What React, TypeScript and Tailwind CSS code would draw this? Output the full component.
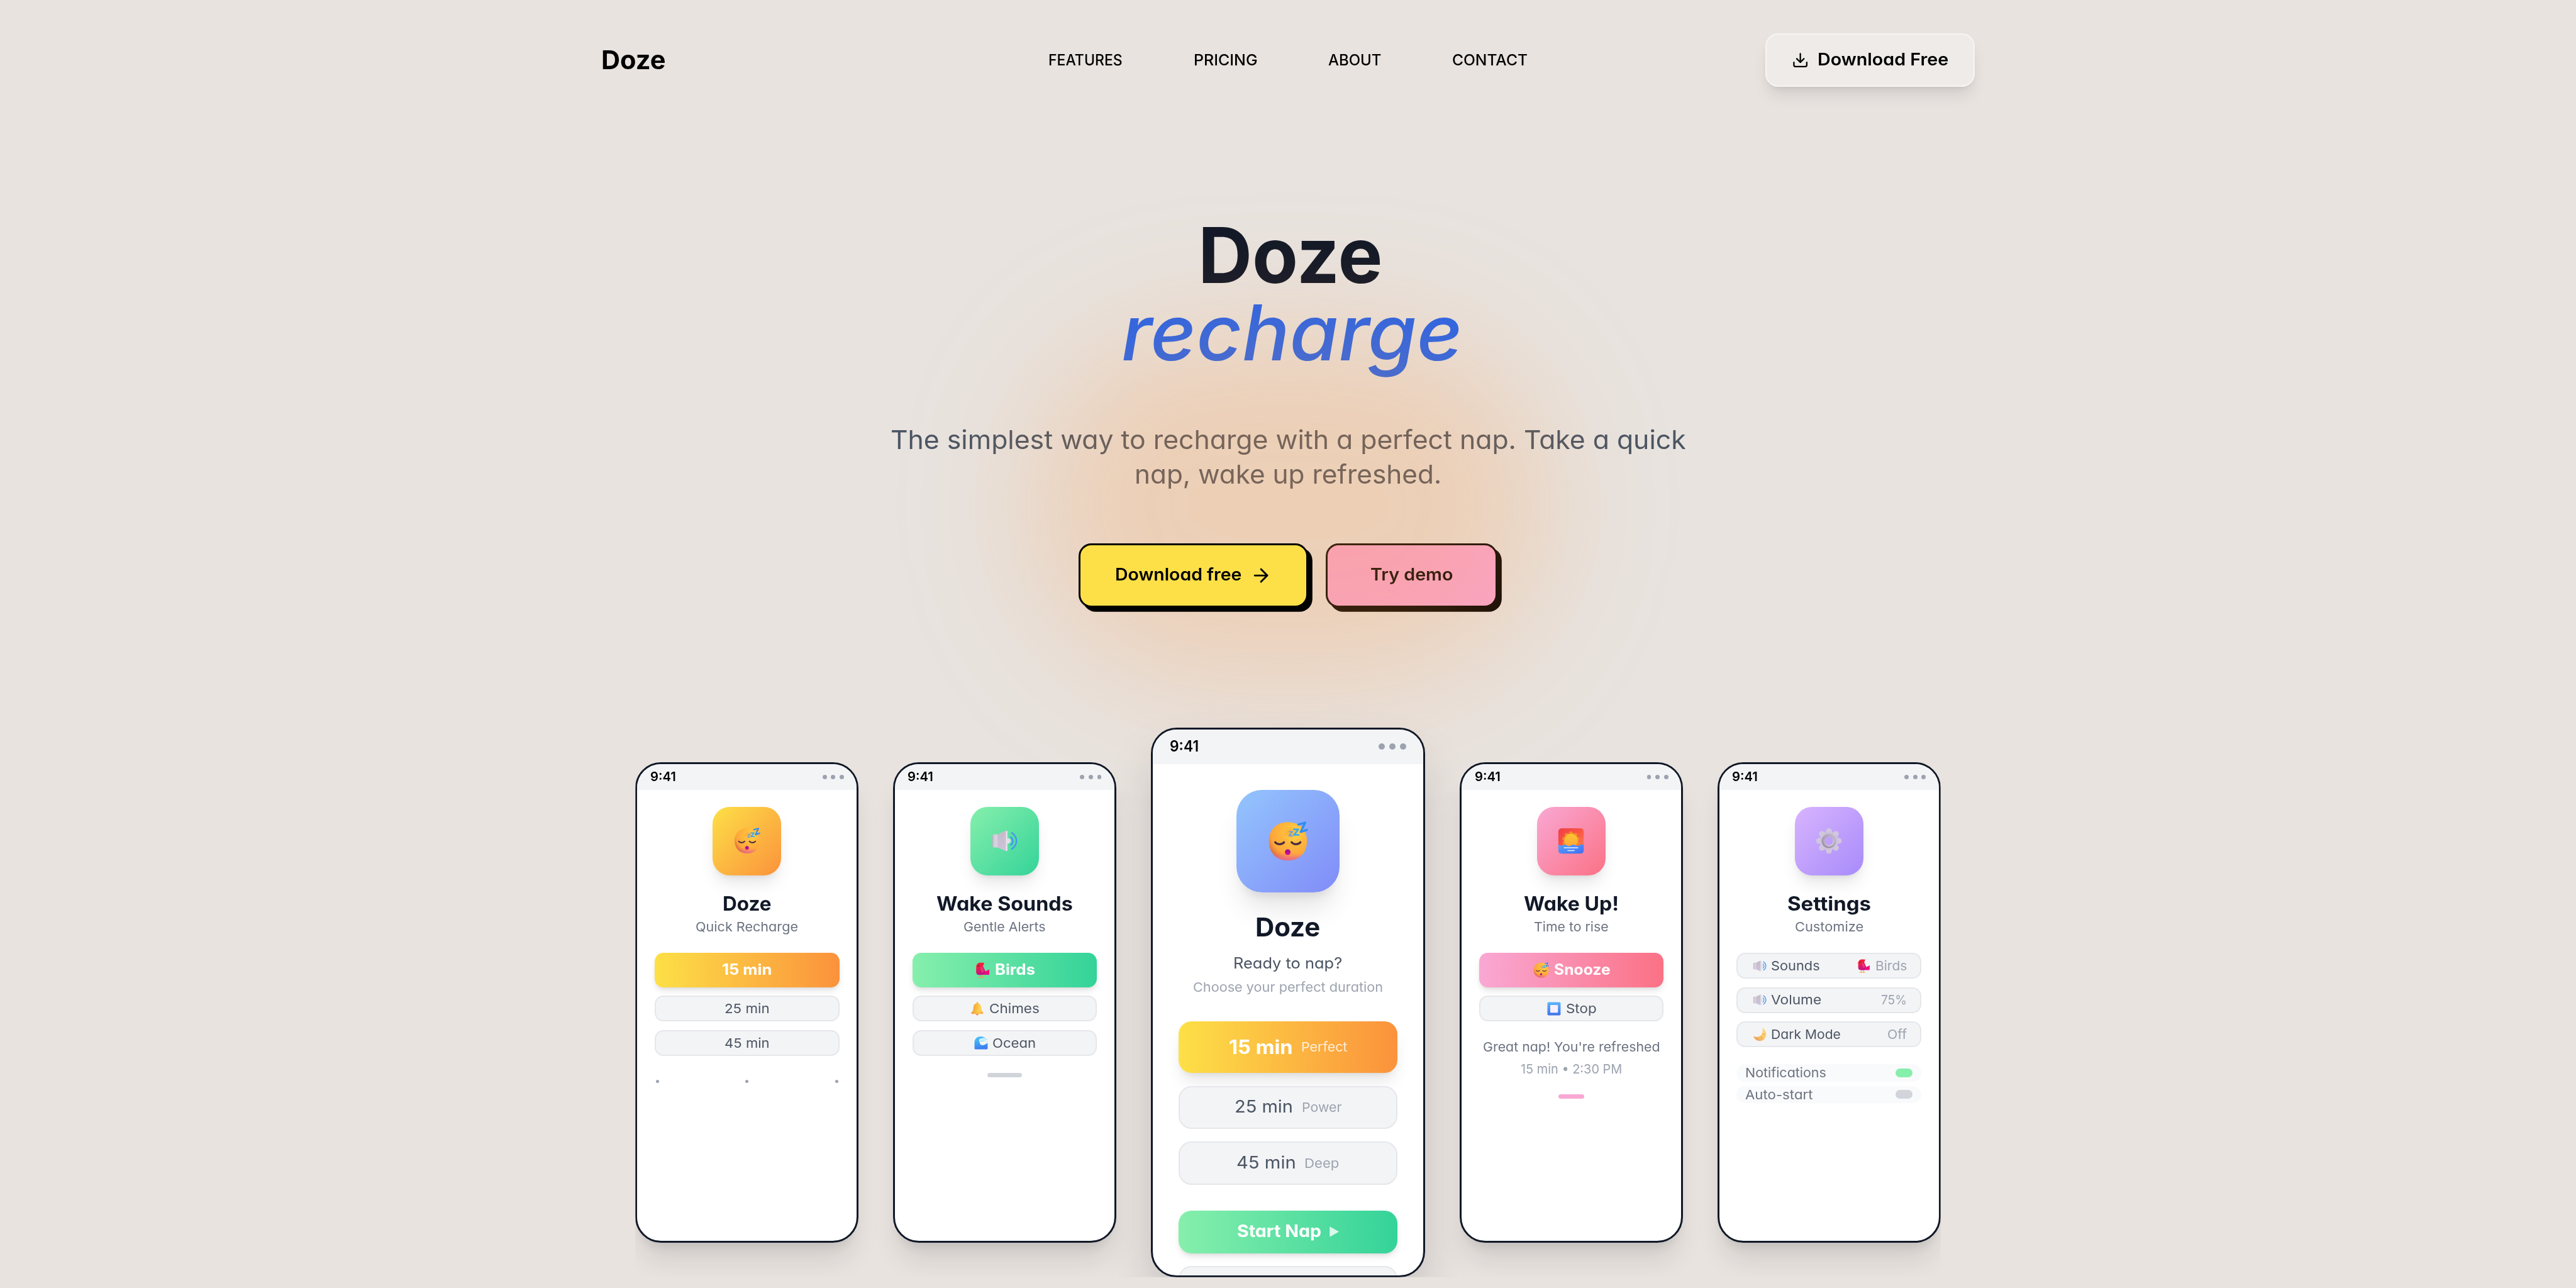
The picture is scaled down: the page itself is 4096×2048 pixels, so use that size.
import { useLayoutEffect, useRef, useState } from "react";
import type { ReactNode } from "react";

/* Text set to an exact advance width by widening or narrowing its letters. */
function T({ w, children, className = "" }: { w: number; children: string; className?: string }) {
  const outer = useRef<HTMLSpanElement>(null);
  const inner = useRef<HTMLSpanElement>(null);
  const [stretch, setStretch] = useState(1);
  useLayoutEffect(() => {
    if (!outer.current || !inner.current) return;
    inner.current.style.transform = "none";
    const ratio = outer.current.getBoundingClientRect().width / inner.current.getBoundingClientRect().width;
    inner.current.style.transform = `scaleX(${ratio})`;
    setStretch(ratio);
  }, [w, children]);
  return (
    <span ref={outer} className={`inline-block shrink-0 text-left whitespace-nowrap ${className}`} style={{ width: w }}>
      <span ref={inner} className="inline-block origin-left whitespace-nowrap" style={{ transform: `scaleX(${stretch})` }}>
        {children}
      </span>
    </span>
  );
}

function Face({ className }: { className: string }) {
  return (
    <svg viewBox="0 0 32 32" className={className}>
      <defs>
        <radialGradient id="faceBase" cx="0.66" cy="0.28" r="0.8">
          <stop offset="0" stopColor="#ffd84e" />
          <stop offset="0.35" stopColor="#ffb93c" />
          <stop offset="0.75" stopColor="#fda63a" />
          <stop offset="1" stopColor="#d9653f" />
        </radialGradient>
        <linearGradient id="faceLow" x1="0" y1="0" x2="0" y2="1">
          <stop offset="0.8" stopColor="#f0699a" stopOpacity="0" />
          <stop offset="1" stopColor="#ea6a9c" stopOpacity="0.85" />
        </linearGradient>
        <radialGradient id="faceShade" cx="0.5" cy="0.5" r="0.5">
          <stop offset="0" stopColor="#ee8f2c" stopOpacity="0.6" />
          <stop offset="1" stopColor="#ee8f2c" stopOpacity="0" />
        </radialGradient>
        <linearGradient id="faceMouth" x1="0" y1="0" x2="0" y2="1">
          <stop offset="0" stopColor="#8f0aa0" />
          <stop offset="1" stopColor="#e0108c" />
        </linearGradient>
      </defs>
      <path d="M16 2C25.5 2 29.8 8.4 29.8 15.8C29.8 23.4 25.2 29.8 16 29.8C6.8 29.8 2.1 23.4 2.1 15.8C2.1 8.4 6.6 2 16 2Z" fill="url(#faceBase)" />
      <path d="M16 2C25.5 2 29.8 8.4 29.8 15.8C29.8 23.4 25.2 29.8 16 29.8C6.8 29.8 2.1 23.4 2.1 15.8C2.1 8.4 6.6 2 16 2Z" fill="url(#faceLow)" />
      <ellipse cx="18" cy="9.5" rx="5.5" ry="4.6" fill="url(#faceShade)" />
      <g fill="none" stroke="#4a2c42" strokeWidth="1.5" strokeLinecap="round">
        <path d="M6.7 16.6C8.3 18.5 11.6 18.5 13.1 16.6" />
        <path d="M18.6 16.6C20.2 18.5 23.5 18.5 25 16.6" />
      </g>
      <circle cx="15.8" cy="23.8" r="2.05" fill="url(#faceMouth)" />
      <g fill="none" strokeLinecap="round" strokeLinejoin="round">
        <path d="M23.5 3.7L28.5 2.3L25.2 9.1L29.7 7.6" stroke="#2f8df2" strokeWidth="1.5" />
        <path d="M20.3 7.2H23.5L20.4 11.2H23.8" stroke="#35a9f6" strokeWidth="1.2" />
        <path d="M17.2 8.8L19.3 8.9L16.8 11.8L19.2 12" stroke="#64a3e8" strokeWidth="0.9" />
      </g>
    </svg>
  );
}

function Speaker({ className }: { className: string }) {
  return (
    <svg viewBox="0 0 32 32" className={className}>
      <defs>
        <linearGradient id="spkBack" x1="0" y1="0" x2="1" y2="0">
          <stop offset="0" stopColor="#b5acba" />
          <stop offset="0.3" stopColor="#d3ccdb" />
          <stop offset="1" stopColor="#dcd6e4" />
        </linearGradient>
        <linearGradient id="spkCone" x1="0" y1="0" x2="0.3" y2="1">
          <stop offset="0" stopColor="#c3bbc4" />
          <stop offset="1" stopColor="#cdc3da" />
        </linearGradient>
      </defs>
      <circle cx="20" cy="16" r="2.9" fill="#e4e0e8" />
      <path d="M4 8.9H9V23.3H4Q2.6 23.3 2.6 21.8V10.4Q2.6 8.9 4 8.9Z" fill="url(#spkBack)" />
      <path d="M8.4 8.9L17.2 4.9Q19.4 4.2 19.4 6.2V25.8Q19.4 27.8 17.2 27.1L8.4 23.3Z" fill="url(#spkCone)" />
      <path d="M18.5 5.7V26.3" stroke="#e6e2ea" strokeWidth="1.7" strokeLinecap="round" />
      <g fill="none" stroke="#4596f3" strokeWidth="1.7" strokeLinecap="round">
        <path d="M23.1 11.8C26.1 14.2 26.1 18.2 23.1 20.6" />
        <path d="M24.2 7.2C31 12 31 20.5 24.2 25" />
      </g>
    </svg>
  );
}

function Bird({ className }: { className: string }) {
  return (
    <svg viewBox="0 0 32 32" className={className}>
      <defs>
        <linearGradient id="birdBody" x1="0.3" y1="0" x2="0.5" y2="1">
          <stop offset="0" stopColor="#fb1f30" />
          <stop offset="0.45" stopColor="#e81d52" />
          <stop offset="1" stopColor="#c0108a" />
        </linearGradient>
        <linearGradient id="birdTail" x1="0" y1="0" x2="1" y2="0">
          <stop offset="0" stopColor="#d4157c" />
          <stop offset="1" stopColor="#fb0a80" />
        </linearGradient>
      </defs>
      <path d="M11.5 24V29.4M16.3 24V29.4M7.8 29.6H12.5M13.6 29.6H19.4" stroke="#f09a30" strokeWidth="1.2" fill="none" strokeLinecap="round" />
      <path d="M5.2 8L2.4 10.2L5.2 11.6Z" fill="#f9b233" />
      <path d="M16 18.5L21 18.8L29.4 14.6V23.6Q29.4 24.7 28.2 24.7H14Z" fill="url(#birdTail)" />
      <path d="M5 10.5C5 5 8.2 2 12.5 2H18.6Q20 2.2 19.6 3.7L17.6 8.2L21.6 17C22.6 21.5 19 24.9 14 24.9H10.5C7 24.9 4.8 22.6 4.8 19Z" fill="url(#birdBody)" />
      <ellipse cx="16" cy="15" rx="2.3" ry="5.6" fill="#f5478f" opacity="0.65" transform="rotate(-18 16 15)" />
      <circle cx="9" cy="8.2" r="1.05" fill="#5a1238" />
    </svg>
  );
}

function Bell({ className }: { className: string }) {
  return (
    <svg viewBox="0 0 32 32" className={className}>
      <defs>
        <linearGradient id="bellBody" x1="0" y1="0.3" x2="1" y2="0.5">
          <stop offset="0" stopColor="#ea9345" />
          <stop offset="0.4" stopColor="#fbb840" />
          <stop offset="0.75" stopColor="#fdd555" />
          <stop offset="1" stopColor="#f7b343" />
        </linearGradient>
      </defs>
      <circle cx="16" cy="27" r="3" fill="#ef8d60" />
      <circle cx="16" cy="4" r="1.9" fill="#f7b13e" />
      <path d="M16 4.2C21.6 4.2 23.8 8.4 24.2 13L25 19.2Q25.3 21 26.8 22Q28.9 23.4 28.9 25.2Q28.9 27 27 27H5Q3.1 27 3.1 25.2Q3.1 23.4 5.2 22Q6.7 21 7 19.2L7.8 13C8.2 8.4 10.4 4.2 16 4.2Z" fill="url(#bellBody)" />
      <path d="M4.5 24.3H27.5" stroke="#e8953f" strokeWidth="0.9" opacity="0.6" />
    </svg>
  );
}

function Wave({ className }: { className: string }) {
  return (
    <svg viewBox="0 0 32 32" className={className}>
      <defs>
        <linearGradient id="waveBody" x1="0" y1="0" x2="0.2" y2="1">
          <stop offset="0" stopColor="#54c4fb" />
          <stop offset="0.6" stopColor="#3fa0f5" />
          <stop offset="1" stopColor="#3d7df0" />
        </linearGradient>
      </defs>
      <path d="M2 16C2 8 7.5 2.6 14.5 2.6C20 2.6 24 4.4 26.5 8.5L22 13H14.5C12 15.5 13.5 20.5 18.5 21.3C22.5 22 26 18.5 30 16.8V28.2Q30 30 28.2 30H3.8Q2 30 2 28.2Z" fill="url(#waveBody)" />
      <path d="M12 9.5Q14 6 18 7Q20.5 4.8 23.2 6.6Q26.5 6 26.6 9.4Q28 11 26 12.2Q24.5 14.4 22.3 12.6Q19.5 14 17.6 12.1Q15 13 14.6 15.2Q13.5 17 12.6 14.6Q11 12 12 9.5Z" fill="#c8f0ff" />
      <circle cx="27.6" cy="9" r="1.1" fill="#8fd8fb" />
      <circle cx="28.4" cy="14.3" r="1" fill="#8fd8fb" />
    </svg>
  );
}

function Sunrise({ className }: { className: string }) {
  return (
    <svg viewBox="0 0 32 32" className={className}>
      <defs>
        <linearGradient id="sunSky" x1="0" y1="0" x2="1" y2="1">
          <stop offset="0" stopColor="#f03f46" />
          <stop offset="0.5" stopColor="#fb5645" />
          <stop offset="1" stopColor="#ff8a55" />
        </linearGradient>
        <linearGradient id="sunDisc" x1="0" y1="0" x2="0" y2="1">
          <stop offset="0" stopColor="#fcc62f" />
          <stop offset="1" stopColor="#fda53b" />
        </linearGradient>
        <linearGradient id="sunSea" x1="0" y1="0" x2="1" y2="1">
          <stop offset="0" stopColor="#58a2ff" />
          <stop offset="1" stopColor="#3f6ef0" />
        </linearGradient>
      </defs>
      <rect x="2" y="2" width="28" height="28" rx="3.6" fill="url(#sunSky)" />
      <g fill="#f38a2a">
        <circle cx="16" cy="8" r="2.4" />
        <circle cx="11.2" cy="9.6" r="2.3" />
        <circle cx="20.8" cy="9.6" r="2.3" />
        <circle cx="8.6" cy="13.6" r="2.2" />
        <circle cx="23.4" cy="13.6" r="2.2" />
        <circle cx="8.8" cy="18.4" r="2.2" />
        <circle cx="23.2" cy="18.4" r="2.2" />
      </g>
      <circle cx="16" cy="15.5" r="7.4" fill="url(#sunDisc)" />
      <path d="M2 20Q4.3 22 6.7 20.6Q9 19.4 11.3 21Q13.6 22.6 16 21Q18.4 19.4 20.7 21Q23 22.4 25.3 20.6Q27.6 19.4 30 20.4V26.4Q30 30 26.4 30H5.6Q2 30 2 26.4Z" fill="url(#sunSea)" />
      <path d="M8.5 23.6H23.5M12.4 26.7H19.6" stroke="#e6eeff" strokeWidth="1.1" strokeLinecap="round" />
    </svg>
  );
}

const teeth = [0, 45, 90, 135, 180, 225, 270, 315];

function Gear({ className }: { className: string }) {
  return (
    <svg viewBox="0 0 32 32" className={className}>
      <defs>
        <linearGradient id="gearRing" x1="1" y1="0" x2="0.2" y2="1">
          <stop offset="0" stopColor="#c6bcd2" />
          <stop offset="1" stopColor="#988ca5" />
        </linearGradient>
        <linearGradient id="gearIn" x1="0" y1="0" x2="1" y2="1">
          <stop offset="0" stopColor="#a89cb3" />
          <stop offset="1" stopColor="#d3cadd" />
        </linearGradient>
      </defs>
      {teeth.map((a) => (
        <path key={a} transform={`rotate(${a} 16 16)`} d="M12 9L13 4.2Q13.4 2 16 2Q18.6 2 19 4.2L20 9Z" fill="#d1c7dd" />
      ))}
      <path fillRule="evenodd" d="M16 6A10 10 0 1 0 16 26A10 10 0 1 0 16 6ZM16 11.4A4.6 4.6 0 1 1 16 20.6A4.6 4.6 0 1 1 16 11.4Z" fill="#cdc3da" />
      <circle cx="16" cy="16" r="7" fill="none" stroke="url(#gearRing)" strokeWidth="2" />
      <circle cx="16" cy="16" r="5.4" fill="none" stroke="url(#gearIn)" strokeWidth="1.5" />
    </svg>
  );
}

function StopSign({ className }: { className: string }) {
  return (
    <svg viewBox="0 0 32 32" className={className}>
      <defs>
        <linearGradient id="stopBox" x1="0" y1="0" x2="0" y2="1">
          <stop offset="0" stopColor="#5db4fa" />
          <stop offset="1" stopColor="#3f74e8" />
        </linearGradient>
      </defs>
      <rect x="2" y="2" width="28" height="28" rx="2.6" fill="url(#stopBox)" />
      <rect x="8" y="8" width="16.4" height="16.4" rx="1" fill="#f8efff" />
    </svg>
  );
}

function Moon({ className }: { className: string }) {
  return (
    <svg viewBox="0 0 32 32" className={className}>
      <defs>
        <linearGradient id="moonBody" x1="1" y1="0" x2="0.2" y2="1">
          <stop offset="0" stopColor="#fcdc86" />
          <stop offset="0.55" stopColor="#fbcb6c" />
          <stop offset="1" stopColor="#ee9d5c" />
        </linearGradient>
      </defs>
      <path d="M23.2 2.6C28 6 30.6 11 30 16.6C29 25 22.4 30.4 14.6 29.6C9.4 29 5.2 25.8 3.2 21.4Q2.8 19.8 4.4 20.2C9.6 22 15.6 21 19.4 16.6C22.4 13 23 8.4 21.8 3.8Q21.6 1.8 23.2 2.6Z" fill="url(#moonBody)" />
      <circle cx="24.6" cy="15" r="1.7" fill="#f0ab52" />
      <circle cx="20" cy="22.4" r="1.9" fill="#f0ab52" />
      <circle cx="12" cy="25.2" r="1.3" fill="#ea9a50" />
    </svg>
  );
}

function DownloadIcon() {
  return (
    <svg viewBox="0 0 24 24" className="size-4" fill="none" stroke="black" strokeWidth="2" strokeLinecap="round" strokeLinejoin="round">
      <path d="M21 15v4a2 2 0 0 1-2 2H5a2 2 0 0 1-2-2v-4" />
      <path d="m7 10 5 5 5-5" />
      <path d="M12 15V3" />
    </svg>
  );
}

function ArrowRight() {
  return (
    <svg viewBox="0 0 24 24" className="size-5" fill="none" stroke="black" strokeWidth="2" strokeLinecap="round" strokeLinejoin="round">
      <path d="M5 12h14" />
      <path d="m12 5 7 7-7 7" />
    </svg>
  );
}

function Phone({ children }: { children: ReactNode }) {
  return (
    <div className="flex h-[448px] w-52 shrink-0 flex-col overflow-hidden rounded-3xl border-2 border-[#111827] bg-white shadow-xl">
      <div className="flex h-6 shrink-0 items-center justify-between bg-[#f3f4f6] px-3">
        <T w={24} className="text-xs font-semibold text-black">9:41</T>
        <div className="flex gap-1">
          <div className="size-1 rounded-full bg-[#9ca3af]" />
          <div className="size-1 rounded-full bg-[#9ca3af]" />
          <div className="size-1 rounded-full bg-[#9ca3af]" />
        </div>
      </div>
      <div className="flex flex-col items-center p-4">{children}</div>
    </div>
  );
}

function AppIcon({ tone, children }: { tone: string; children: ReactNode }) {
  return <div className={`flex size-16 items-center justify-center rounded-2xl shadow-lg ${tone}`}>{children}</div>;
}

function Heading({ title, titleW, sub, subW }: { title: string; titleW: number; sub: string; subW: number }) {
  return (
    <div className="mt-3 mb-4 flex flex-col items-center">
      <T w={titleW} className="text-lg leading-7 font-bold text-[#111827]">{title}</T>
      <T w={subW} className="text-xs text-[#6b7280]">{sub}</T>
    </div>
  );
}

function Primary({ tone, children }: { tone: string; children: ReactNode }) {
  return (
    <div className={`flex h-8 w-[172px] items-center justify-center rounded-lg text-sm font-bold text-white shadow-md ${tone}`}>
      {children}
    </div>
  );
}

function Pill({ children }: { children: ReactNode }) {
  return (
    <div className="flex h-6 w-[172px] items-center justify-center rounded-lg border-[1.2px] border-[#e5e7eb] bg-[#f3f4f6] text-xs text-[#4b5563]">
      {children}
    </div>
  );
}

function SettingRow({ icon, label, labelW, children }: { icon: ReactNode; label: string; labelW: number; children: ReactNode }) {
  return (
    <div className="flex h-6 w-[172px] items-center justify-between rounded-lg border-[1.2px] border-[#e5e7eb] bg-[#f3f4f6] px-3 text-xs text-[#4b5563]">
      <div className="flex items-center gap-1">
        {icon}
        <T w={labelW}>{label}</T>
      </div>
      <div className="flex items-center gap-1 text-[#9ca3af]">{children}</div>
    </div>
  );
}

function ToggleRow({ label, w, tone }: { label: string; w: number; tone: string }) {
  return (
    <div className="flex h-4 w-[172px] items-center justify-between rounded-lg bg-[#f9fafb] px-2 text-xs text-[#6b7280]">
      <T w={w}>{label}</T>
      <div className={`h-2 w-4 rounded-full ${tone}`} />
    </div>
  );
}

function CenterPhone() {
  return (
    <div className="flex h-[512px] w-64 shrink-0 flex-col overflow-hidden rounded-3xl border-2 border-[#111827] bg-white shadow-2xl">
      <div className="flex h-8 shrink-0 items-center justify-between bg-[#f3f4f6] px-4">
        <T w={27} className="text-sm font-semibold text-black">9:41</T>
        <div className="flex gap-1">
          <div className="size-1.5 rounded-full bg-[#9ca3af]" />
          <div className="size-1.5 rounded-full bg-[#9ca3af]" />
          <div className="size-1.5 rounded-full bg-[#9ca3af]" />
        </div>
      </div>
      <div className="flex flex-col items-center p-6">
        <div className="flex size-24 shrink-0 items-center justify-center rounded-3xl bg-[linear-gradient(135deg,#93c5fd,#818cf8)] shadow-xl">
          <Face className="size-[41px]" />
        </div>
        <T w={60.5} className="mt-4 text-2xl leading-8 font-bold text-[#111827]">Doze</T>
        <T w={101.5} className="mt-2 text-sm text-[#4b5563]">Ready to nap?</T>
        <T w={177} className="mt-1 text-xs text-[#9ca3af]">Choose your perfect duration</T>
        <div className="mt-6 flex flex-col gap-3">
          <div className="flex h-12 w-[204px] shrink-0 items-center justify-center gap-2 rounded-xl bg-[linear-gradient(90deg,#fde047,#fb923c)] shadow-lg">
            <T w={59.5} className="text-lg font-bold text-white">15 min</T>
            <T w={43} className="text-xs text-white/80">Perfect</T>
          </div>
          <div className="flex h-10 w-[204px] shrink-0 items-center justify-center gap-2 rounded-xl border-[1.2px] border-[#e5e7eb] bg-[#f3f4f6]">
            <T w={54.5} className="text-base text-[#4b5563]">25 min</T>
            <T w={37.2} className="text-xs text-[#9ca3af]">Power</T>
          </div>
          <div className="flex h-10 w-[204px] shrink-0 items-center justify-center gap-2 rounded-xl border-[1.2px] border-[#e5e7eb] bg-[#f3f4f6]">
            <T w={55.5} className="text-base text-[#4b5563]">45 min</T>
            <T w={32.5} className="text-xs text-[#9ca3af]">Deep</T>
          </div>
        </div>
        <div className="mt-6 flex flex-col gap-3">
          <div className="flex h-10 w-[204px] shrink-0 items-center justify-center gap-2 rounded-xl bg-[linear-gradient(90deg,#86efac,#34d399)] shadow-md">
            <T w={78.5} className="text-base font-bold text-white">Start Nap</T>
            <svg viewBox="0 0 9 10" className="h-2.5 w-[9px]">
              <path d="M0.2 0.2L8.8 5L0.2 9.8Z" fill="white" fillOpacity="0.8" />
            </svg>
          </div>
          <div className="h-10 w-[204px] shrink-0 rounded-xl border-[1.2px] border-[#e5e7eb] bg-[#f3f4f6]" />
        </div>
      </div>
    </div>
  );
}

export default function App() {
  return (
    <div className="h-[2048px] w-[4096px] overflow-hidden bg-[#e8e3df]">
      <div className="h-[1200px] w-[2400px] overflow-hidden [zoom:1.7066667] [font-family:Inter,sans-serif] [font-feature-settings:'cv11']">
        <header className="mx-auto grid h-28 w-[1280px] grid-cols-[1fr_auto_1fr] items-center">
          <T w={60} className="text-2xl font-bold text-black">Doze</T>
          <nav className="flex gap-[66px] text-sm font-medium text-black">
            <T w={69}>FEATURES</T>
            <T w={59.5}>PRICING</T>
            <T w={49.5}>ABOUT</T>
            <T w={70.3}>CONTACT</T>
          </nav>
          <div className="flex h-[50px] w-[195px] items-center justify-center gap-2 justify-self-end rounded-xl border-[1.2px] border-white/50 bg-white/30 text-base font-semibold text-black shadow-lg">
            <DownloadIcon />
            <T w={122}>Download Free</T>
          </div>
        </header>

        <main className="relative flex flex-col items-center pt-[90px]">
          <h1 className="flex flex-col items-center text-7xl leading-[72px]">
            <T w={172} className="ml-1 font-bold text-[#111827]">Doze</T>
            <T w={318} className="ml-2 font-medium text-[#2563eb] italic">recharge</T>
          </h1>
          <div className="mt-12 flex flex-col items-center text-2xl leading-8 text-[#4b5563]">
            <T w={741}>The simplest way to recharge with a perfect nap. Take a quick</T>
            <T w={286}>nap, wake up refreshed.</T>
          </div>
          <div className="mt-12 flex gap-4">
            <div className="relative z-20 flex h-[60px] w-[214px] items-center justify-center gap-2 rounded-xl border-2 border-black bg-[#fde047] text-base font-semibold text-black shadow-[4px_4px_0_#000]">
              <T w={118}>Download free</T>
              <ArrowRight />
            </div>
            <div className="flex h-[60px] w-40 items-center justify-center rounded-xl border-2 border-black bg-[#f9a8d4] text-base font-semibold text-black shadow-[4px_4px_0_#000]">
              <T w={77}>Try demo</T>
            </div>
          </div>

          <div className="pointer-events-none absolute top-[196px] left-[960px] z-10 h-[326px] w-[480px] rounded-full bg-[#fb923c]/25 blur-[60px]" />

          <section className="relative z-20 mt-28 h-[512px] w-[1216px] [clip-path:inset(-40px_0_0_0)]">
            <div className="flex h-[512px] items-center gap-8">
              <Phone>
                <AppIcon tone="bg-[linear-gradient(135deg,#fde047,#fb923c)]">
                  <Face className="size-[27px]" />
                </AppIcon>
                <Heading title="Doze" titleW={45.5} sub="Quick Recharge" subW={95.5} />
                <div className="flex flex-col gap-2">
                  <Primary tone="bg-[linear-gradient(90deg,#fde047,#fb923c)]">
                    <T w={46.5}>15 min</T>
                  </Primary>
                  <Pill>
                    <T w={42}>25 min</T>
                  </Pill>
                  <Pill>
                    <T w={42}>45 min</T>
                  </Pill>
                </div>
                <div className="mt-4 flex h-4 w-[172px] items-center justify-between px-px">
                  <div className="size-[3px] rounded-full bg-[#9ca3af]" />
                  <div className="size-[3px] rounded-full bg-[#9ca3af]" />
                  <div className="size-[3px] rounded-full bg-[#9ca3af]" />
                </div>
              </Phone>

              <Phone>
                <AppIcon tone="bg-[linear-gradient(135deg,#86efac,#34d399)]">
                  <Speaker className="size-[27px]" />
                </AppIcon>
                <Heading title="Wake Sounds" titleW={127} sub="Gentle Alerts" subW={76.5} />
                <div className="flex flex-col gap-2">
                  <Primary tone="bg-[linear-gradient(90deg,#86efac,#34d399)]">
                    <Bird className="mr-1 size-4" />
                    <T w={37.5}>Birds</T>
                  </Primary>
                  <Pill>
                    <Bell className="mr-1 size-3.5" />
                    <T w={46.8}>Chimes</T>
                  </Pill>
                  <Pill>
                    <Wave className="mr-1 size-3.5" />
                    <T w={40.5}>Ocean</T>
                  </Pill>
                </div>
                <div className="mt-4 h-1 w-8 rounded-full bg-[#d1d5db]" />
              </Phone>

              <CenterPhone />

              <Phone>
                <AppIcon tone="bg-[linear-gradient(135deg,#f9a8d4,#fb7185)]">
                  <Sunrise className="size-[27px]" />
                </AppIcon>
                <Heading title="Wake Up!" titleW={88.5} sub="Time to rise" subW={69.5} />
                <div className="flex flex-col gap-2">
                  <Primary tone="bg-[linear-gradient(90deg,#f9a8d4,#fb7185)]">
                    <Face className="mr-1 size-4" />
                    <T w={52.5}>Snooze</T>
                  </Primary>
                  <Pill>
                    <StopSign className="mr-1 size-3.5" />
                    <T w={28.5}>Stop</T>
                  </Pill>
                </div>
                <div className="mt-4 flex flex-col items-center gap-1 text-xs">
                  <T w={165} className="text-[#6b7280]">Great nap! You're refreshed</T>
                  <T w={94.5} className="text-[#9ca3af]">15 min • 2:30 PM</T>
                </div>
                <div className="mt-4 h-1 w-6 rounded-full bg-[#f9a8d4]" />
              </Phone>

              <Phone>
                <AppIcon tone="bg-[linear-gradient(135deg,#d8b4fe,#a78bfa)]">
                  <Gear className="size-[27px]" />
                </AppIcon>
                <Heading title="Settings" titleW={78} sub="Customize" subW={64} />
                <div className="flex flex-col gap-2">
                  <SettingRow icon={<Speaker className="ml-px size-3.5" />} label="Sounds" labelW={45.5}>
                    <Bird className="size-3.5" />
                    <T w={29.5}>Birds</T>
                  </SettingRow>
                  <SettingRow icon={<Speaker className="ml-px size-3.5" />} label="Volume" labelW={47}>
                    <T w={24}>75%</T>
                  </SettingRow>
                  <SettingRow icon={<Moon className="ml-px size-3.5" />} label="Dark Mode" labelW={65}>
                    <T w={18.3}>Off</T>
                  </SettingRow>
                </div>
                <div className="mt-4 flex flex-col gap-1">
                  <ToggleRow label="Notifications" w={75.5} tone="bg-[#86efac]" />
                  <ToggleRow label="Auto-start" w={63} tone="bg-[#d1d5db]" />
                </div>
              </Phone>
            </div>
          </section>
        </main>
      </div>
    </div>
  );
}
